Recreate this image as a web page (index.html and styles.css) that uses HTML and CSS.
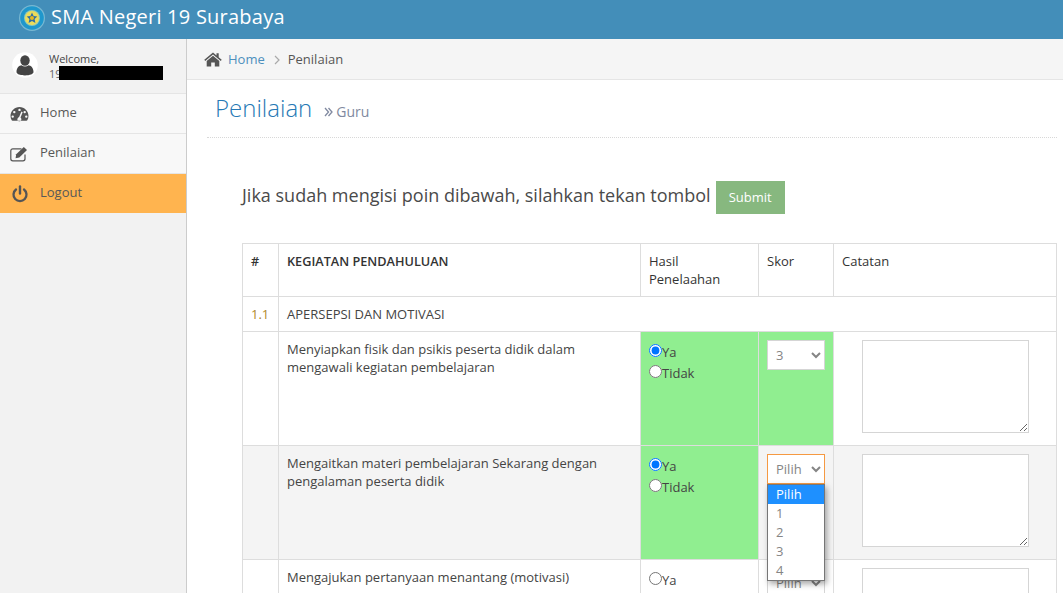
FILE: index.html
```html
<!DOCTYPE html>
<html lang="id">
<head>
<meta charset="utf-8">
<title>Penilaian</title>
<link rel="stylesheet" href="styles.css">
</head>
<body>
<header class="topbar">
  <svg class="logo" viewBox="0 0 26 26" width="26" height="26"><circle cx="13" cy="13" r="13" fill="#78b8d2"/><circle cx="13" cy="13" r="11.800" fill="#1f97cc"/><circle cx="13" cy="13" r="8" fill="#8fc9b8"/><circle cx="13" cy="13" r="7" fill="#ecdc5a"/><path d="M13 7.500l1.600 3.600 3.700.4-2.700 2.600.8 3.800-3.400-2-3.400 2 .8-3.800-2.700-2.600 3.700-.4z" fill="#2f6fa5"/><circle cx="13" cy="13" r="2" fill="#e8b820"/></svg>
  <span class="brand">SMA Negeri 19 Surabaya</span>
</header>
<div class="layout">
  <aside class="sidebar">
    <div class="user">
      <div class="avatar">
        <svg viewBox="0 0 26 26" width="26" height="26"><circle cx="13" cy="13" r="12.800" fill="#fff"/><ellipse cx="13" cy="8.500" rx="4.700" ry="5.300" fill="#444"/><path d="M4.500 20c0-4.500 2.800-6.500 5-6.800 1 .8 2.300 1.200 3.500 1.200s2.500-.4 3.500-1.200c2.200.3 5 2.300 5 6.800 0 2-3.600 3.400-8.500 3.400S4.500 22 4.500 20z" fill="#444"/></svg>
      </div>
      <div class="user-text">
        <div>Welcome,</div>
        <div class="user-name">19<span class="redact"></span></div>
      </div>
    </div>
    <nav>
      <a class="nav-item">
        <svg class="nav-icon" viewBox="0 0 20 16" width="20" height="16"><path fill-rule="evenodd" d="M9.500 1C4.500 1 .500 5 .500 10c0 1.600.400 3.100 1.200 4.300.2.300.5.500.8.500h14c.3 0 .6-.2.800-.5.800-1.200 1.200-2.700 1.200-4.300C18.500 5 14.500 1 9.500 1zM9.500 2.700a1.200 1.200 0 1 1 0 2.400 1.200 1.200 0 0 1 0-2.400zM4.300 4.900a1.200 1.200 0 1 1 0 2.400 1.200 1.200 0 0 1 0-2.400zM2.700 9.400a1.200 1.200 0 1 1 0 2.400 1.200 1.200 0 0 1 0-2.400zM16.300 9.400a1.200 1.200 0 1 1 0 2.400 1.200 1.200 0 0 1 0-2.400zM14.700 4.900a1.200 1.200 0 1 1 0 2.400 1.200 1.200 0 0 1 0-2.400zM12.700 6.200l-2.200 5.400a2 2 0 1 1-1.500-.3l2.400-5.700z" fill="#555"/></svg>
        <span>Home</span>
      </a>
      <a class="nav-item">
        <svg class="nav-icon" viewBox="0 0 20 16" width="20" height="16"><path d="M15 8.500v4.300c0 1.100-.9 2-2 2H2.800c-1.100 0-2-.9-2-2V4.800c0-1.100.9-2 2-2h8.700" fill="none" stroke="#555" stroke-width="1.200"/><path d="M6.200 8.300l7.600-7.300 3.200 3.100-7.700 7.500-3.700.6z" fill="#555"/></svg>
        <span>Penilaian</span>
      </a>
      <a class="nav-item nav-logout">
        <svg class="nav-icon" viewBox="0 0 20 18" width="20" height="18"><path d="M6 4.500a6.500 6.500 0 1 0 8 0" fill="none" stroke="#555" stroke-width="2.300" stroke-linecap="round"/><path d="M10 1.500v7" stroke="#555" stroke-width="2.400" stroke-linecap="round"/></svg>
        <span>Logout</span>
      </a>
    </nav>
  </aside>
  <main class="content">
    <div class="breadcrumb">
      <svg class="home-icon" viewBox="0 0 18 15" width="18" height="15"><path d="M9 .6L.3 7.800l.9 1.100L9 2.500l7.800 6.400.9-1.100-3-2.500V1.300h-2.200v2.200z" fill="#555"/><path d="M9 3.700L2.700 8.900v5.500h4.500v-4h3.600v4h4.500V8.900z" fill="#555"/></svg>
      <a class="crumb-link">Home</a>
      <svg class="crumb-sep" viewBox="0 0 6 10" width="6" height="10"><path d="M1 1l4 4-4 4" fill="none" stroke="#aaa" stroke-width="1.200"/></svg>
      <span>Penilaian</span>
    </div>
    <div class="page-head">
      <h1>Penilaian</h1>
      <small class="sub">
        <svg class="sub-icon" viewBox="0 0 9 10" width="9" height="10"><path d="M1 1l3.500 4L1 9M4.500 1L8 5 4.500 9" fill="none" stroke="#8089a0" stroke-width="1.300"/></svg>
        <span>Guru</span>
      </small>
    </div>
    <div class="submit-line">
      <span class="submit-text">Jika sudah mengisi poin dibawah, silahkan tekan tombol</span>
      <button class="btn-submit" type="button">Submit</button>
    </div>
    <table class="grid">
      <colgroup><col class="c-no"><col class="c-item"><col class="c-hasil"><col class="c-skor"><col class="c-cat"></colgroup>
      <thead>
        <tr>
          <th class="strong">#</th>
          <th class="strong">KEGIATAN PENDAHULUAN</th>
          <th>Hasil<br>Penelaahan</th>
          <th>Skor</th>
          <th>Catatan</th>
        </tr>
      </thead>
      <tbody>
        <tr class="section">
          <td class="num">1.1</td>
          <td colspan="4">APERSEPSI DAN MOTIVASI</td>
        </tr>
        <tr class="item">
          <td></td>
          <td>Menyiapkan fisik dan psikis peserta didik dalam<br>mengawali kegiatan pembelajaran</td>
          <td class="ok answer">
            <label class="radio"><input type="radio" name="a" checked>Ya</label>
            <label class="radio"><input type="radio" name="a">Tidak</label>
          </td>
          <td class="ok">
            <select class="score"><option>Pilih</option><option>1</option><option>2</option><option selected>3</option><option>4</option></select>
          </td>
          <td class="note"><textarea></textarea></td>
        </tr>
        <tr class="item alt">
          <td></td>
          <td>Mengaitkan materi pembelajaran Sekarang dengan<br>pengalaman peserta didik</td>
          <td class="ok answer">
            <label class="radio"><input type="radio" name="b" checked>Ya</label>
            <label class="radio"><input type="radio" name="b">Tidak</label>
          </td>
          <td>
            <div class="select-wrap">
              <select class="score focused"><option>Pilih</option></select>
              <ul class="dropdown">
                <li class="selected">Pilih</li>
                <li>1</li>
                <li>2</li>
                <li>3</li>
                <li>4</li>
              </ul>
            </div>
          </td>
          <td class="note"><textarea></textarea></td>
        </tr>
        <tr class="item">
          <td></td>
          <td>Mengajukan pertanyaan menantang (motivasi)</td>
          <td class="answer">
            <label class="radio"><input type="radio" name="c">Ya</label>
          </td>
          <td>
            <select class="score"><option>Pilih</option></select>
          </td>
          <td class="note"><textarea></textarea></td>
        </tr>
      </tbody>
    </table>
  </main>
</div>
</body>
</html>
```

FILE: styles.css
```css
* { box-sizing: border-box; }
html, body { margin: 0; height: 593px; overflow: hidden; }
body {
  font-family: "Open Sans", sans-serif;
  font-size: 13px;
  line-height: 18px;
  color: #444;
  background: #fff;
}
.topbar {
  height: 39px;
  background: #438eb9;
  display: flex;
  align-items: center;
  padding: 0 0 9px 19px;
  gap: 6px;
  color: #fff;
}
.logo { flex: none; margin-top: 5px; }
.brand { font-size: 20px; line-height: 28px; letter-spacing: 0.23px; margin-top: 4px; }
.layout { display: flex; height: 554px; }
.sidebar {
  width: 187px;
  flex: none;
  background: #f2f2f2;
  border-right: 1px solid #ccc;
}
.user {
  height: 55px;
  display: flex;
  padding: 13px 0 0 12px;
  gap: 11px;
  border-bottom: 1px solid #e5e5e5;
  font-size: 11px;
  line-height: 15px;
}
.avatar { width: 26px; height: 26px; flex: none; }
.user-text { margin-top: -1px; }
.user-name { color: #666; }
.redact {
  display: inline-block;
  width: 104px;
  height: 14px;
  background: #000;
  vertical-align: top;
  margin-left: -3px;
}
.nav-item {
  display: flex;
  align-items: center;
  height: 40px;
  padding: 0 0 3px 10px;
  gap: 10px;
  background: #f8f8f8;
  border-bottom: 1px solid #e5e5e5;
  color: #585858;
}
.nav-icon { flex: none; margin-top: 4px; }
.nav-logout { height: 39px; background: #ffb44f; border-bottom: 0; padding-bottom: 4px; }
.content { flex: 1; min-width: 0; }
.breadcrumb {
  height: 41px;
  background: #f5f5f5;
  border-bottom: 1px solid #e5e5e5;
  display: flex;
  align-items: center;
  padding-left: 17px;
  color: #555;
}
.home-icon { margin-right: 6px; }
.crumb-link { color: #4c8fbd; }
.crumb-sep { margin: 1px 8px 0 9px; }
.page-head {
  margin: 0 6px 0 20px;
  height: 58px;
  padding: 8px 0 0 8px;
  border-bottom: 1px dotted #d8d8d8;
  display: flex;
  align-items: baseline;
  gap: 12px;
}
h1 {
  margin: 0;
  font-size: 24px;
  line-height: 40px;
  font-weight: 300;
  color: #2679b5;
}
.sub {
  display: flex;
  align-items: center;
  gap: 3px;
  font-size: 14px;
  color: #8089a0;
}
.sub-icon { flex: none; margin-top: 1px; }
.submit-line {
  margin: 43px 0 0 55px;
  height: 33px;
  display: flex;
  align-items: flex-start;
  gap: 5px;
}
.submit-text { font-size: 18px; line-height: 28px; color: #4a4a4a; }
.btn-submit {
  width: 69px;
  height: 33px;
  border: 0;
  padding: 0 0 2px;
  background: #87b87f;
  color: #fff;
  font: 13px "Open Sans", sans-serif;
}
.grid {
  margin: 29px 0 0 55px;
  width: 814px;
  table-layout: fixed;
  border-collapse: collapse;
}
.c-no { width: 36px; }
.c-item { width: 362px; }
.c-hasil { width: 118px; }
.c-skor { width: 75px; }
.c-cat { width: 223px; }
th, td {
  border: 1px solid #ddd;
  padding: 8px;
  vertical-align: top;
  text-align: left;
  font-weight: 400;
}
th { height: 53px; color: #333; }
th.strong { font-weight: 600; font-size: 12.700px; }
.section { height: 35px; }
.num { color: #b08a2c; }
.item { height: 114px; }
.alt td { background: #f4f4f4; }
.item td.ok { background: #90ee90; }
td.answer { padding-top: 10px; }
.radio { display: block; height: 21px; line-height: 21px; }
.radio input { margin: 0; width: 13px; height: 13px; vertical-align: 0; }
.score {
  display: block;
  width: 58px;
  height: 30px;
  border: 1px solid #d5d5d5;
  border-radius: 0;
  background: #fff;
  color: #858585;
  font: 13px "Open Sans", sans-serif;
  padding: 0 0 0 4px;
  margin: 0;
}
.focused { border-color: #f59942; }
.select-wrap { position: relative; }
.dropdown {
  position: absolute;
  top: 30px;
  left: 0;
  z-index: 2;
  width: 58px;
  height: 97px;
  margin: 0;
  padding: 0;
  list-style: none;
  background: #fff;
  border: 1px solid #767676;
  box-shadow: 2px 3px 6px rgba(0,0,0,.35);
  color: #858585;
  line-height: 19px;
}
.dropdown li { height: 19px; padding-left: 8px; }
.dropdown .selected { background: #1e90ff; color: #fff; }
td.note { padding: 8px 0 0 28px; }
textarea {
  display: block;
  width: 167px;
  height: 93px;
  margin: 0;
  border: 1px solid #d5d5d5;
  border-radius: 0;
  background: #fff;
}
```
